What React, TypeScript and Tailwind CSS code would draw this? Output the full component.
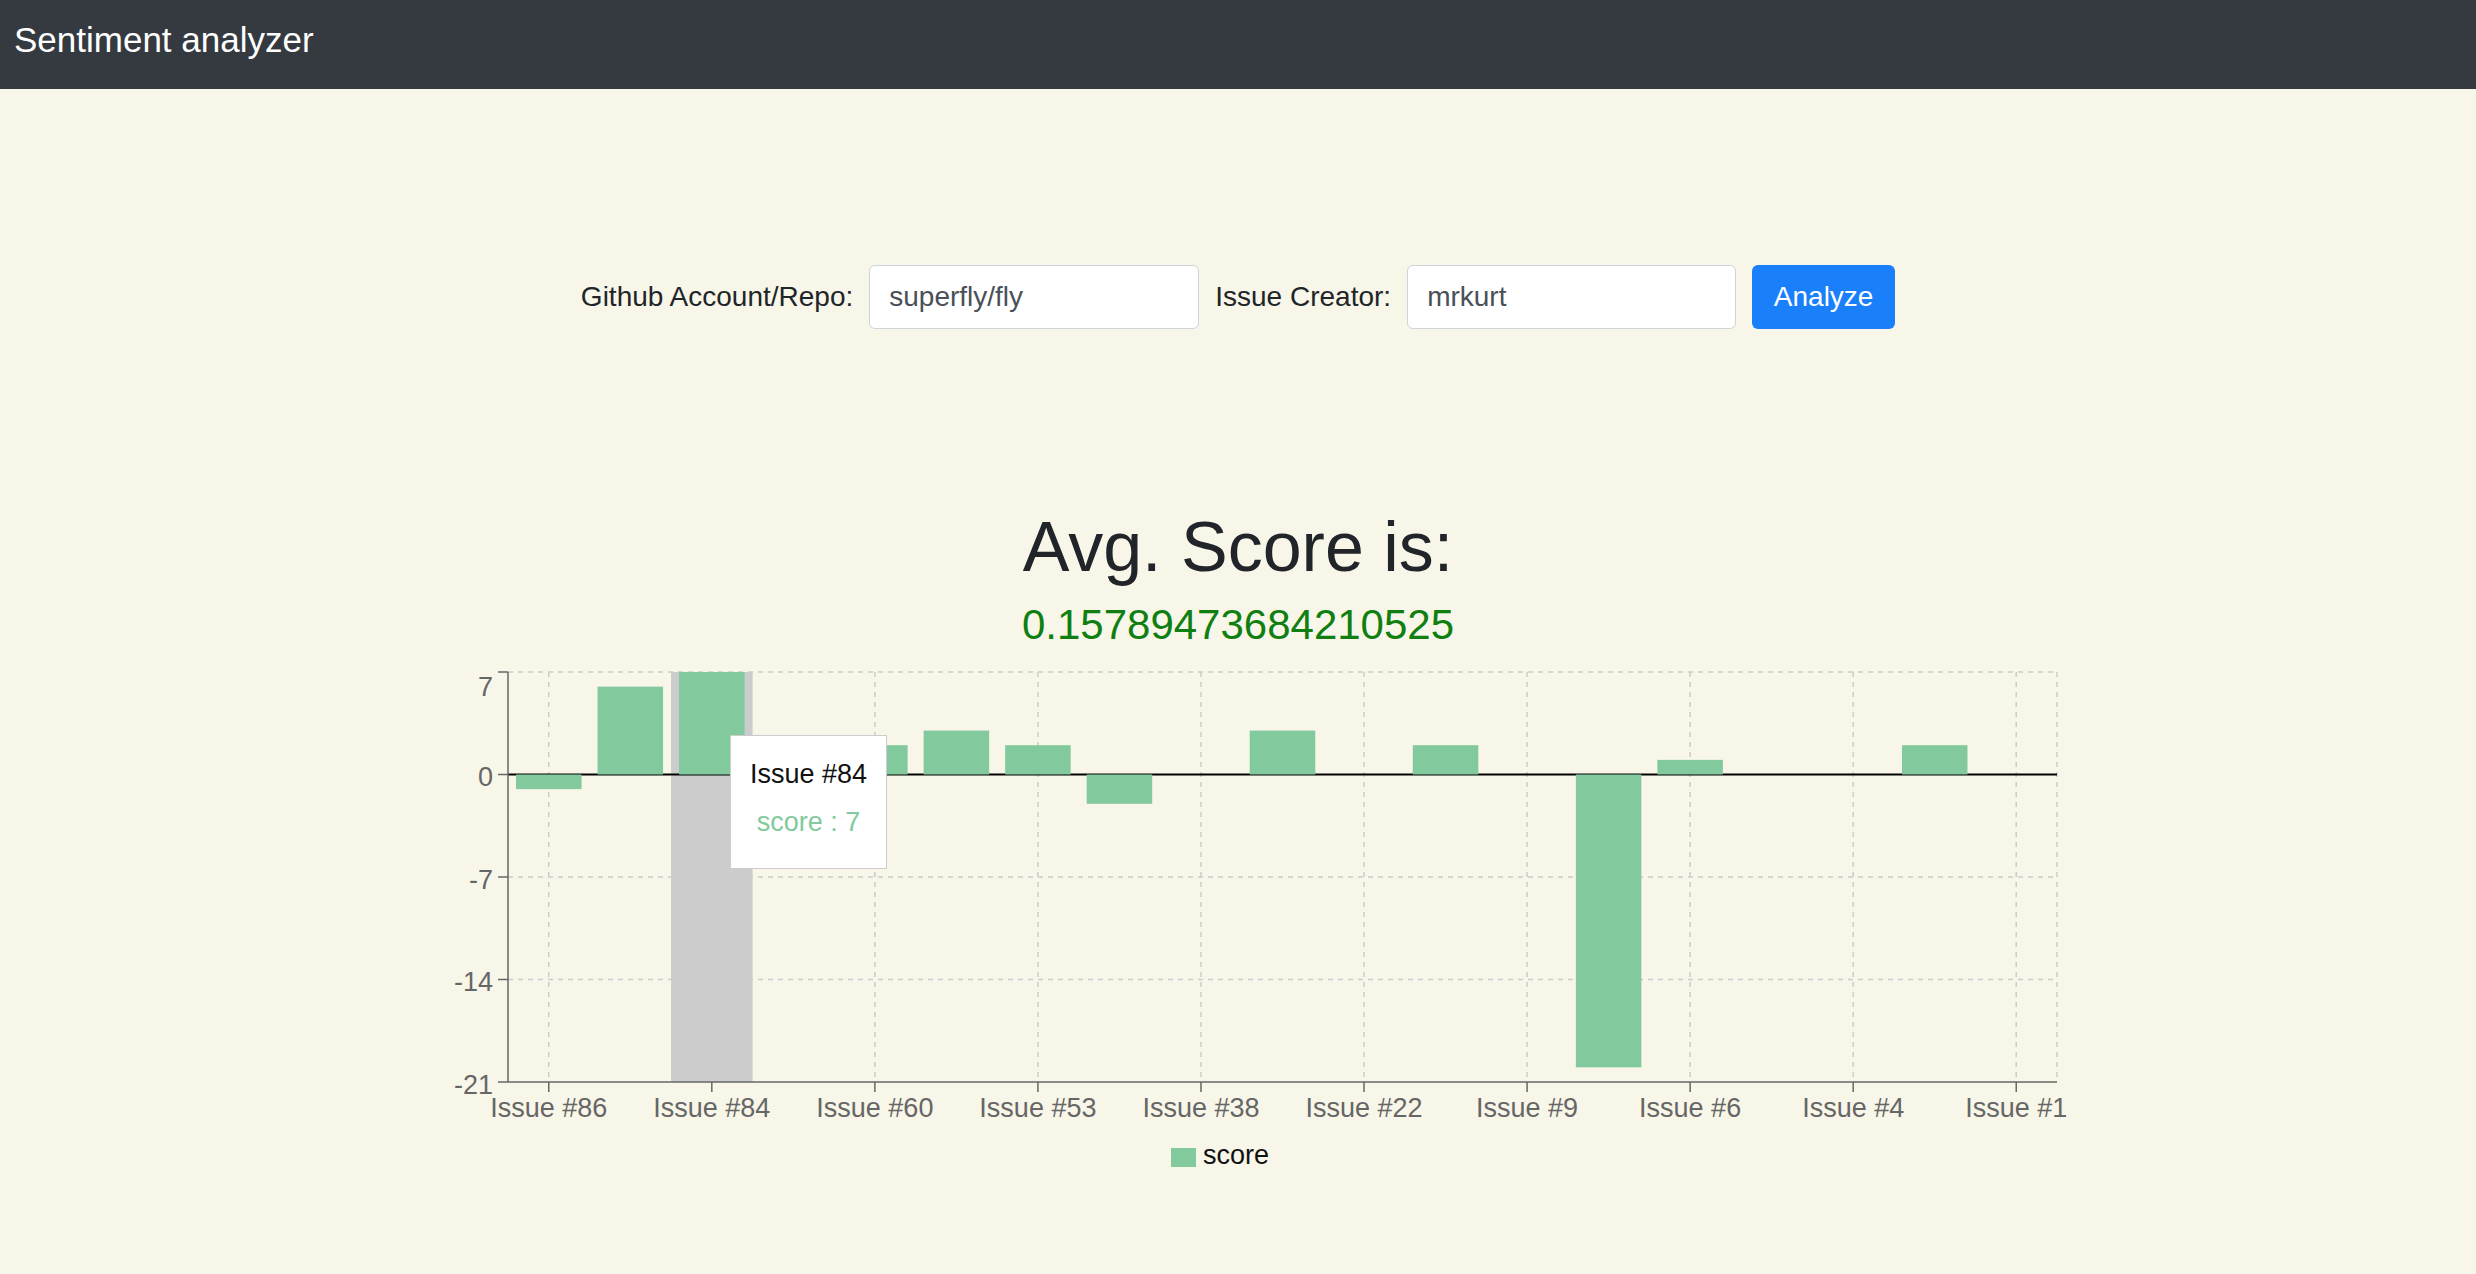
import { Fragment } from "react";

type Point = { name: string; score: number };

const data: Point[] = [
  { name: "Issue #86", score: -1 },
  { name: "Issue #85", score: 6 },
  { name: "Issue #84", score: 7 },
  { name: "Issue #72", score: -2 },
  { name: "Issue #60", score: 2 },
  { name: "Issue #58", score: 3 },
  { name: "Issue #53", score: 2 },
  { name: "Issue #47", score: -2 },
  { name: "Issue #38", score: 0 },
  { name: "Issue #31", score: 3 },
  { name: "Issue #22", score: 0 },
  { name: "Issue #14", score: 2 },
  { name: "Issue #9", score: 0 },
  { name: "Issue #8", score: -20 },
  { name: "Issue #6", score: 1 },
  { name: "Issue #5", score: 0 },
  { name: "Issue #4", score: 0 },
  { name: "Issue #2", score: 2 },
  { name: "Issue #1", score: 0 },
];

// plot area inside the svg
const X0 = 108;
const X1 = 1657;
const Y0 = 23;
const Y1 = 433;
const MIN = -21;
const MAX = 7;
const band = (X1 - X0) / data.length;
const yOf = (v: number) => Y0 + ((MAX - v) * (Y1 - Y0)) / (MAX - MIN);
const yTicks = [7, 0, -7, -14, -21];
const active = 2;

const ScoreChart = () => {
  const zero = yOf(0);
  return (
    <div className="relative mt-[3px] h-[540px] w-[1676px]">
      <svg width={1676} height={540} className="block">
        {/* grid */}
        {[7, -7, -14].map((v) => (
          <line
            key={v}
            x1={X0}
            x2={X1}
            y1={yOf(v)}
            y2={yOf(v)}
            stroke="#ccc"
            strokeWidth={1.5}
            strokeDasharray="5 5"
          />
        ))}
        {data.map((d, i) =>
          i % 2 === 0 ? (
            <line
              key={d.name}
              x1={X0 + band * (i + 0.5)}
              x2={X0 + band * (i + 0.5)}
              y1={Y0}
              y2={Y1}
              stroke="#ccc"
              strokeWidth={1.5}
              strokeDasharray="5 5"
            />
          ) : null
        )}
        <line x1={X1} x2={X1} y1={Y0} y2={Y1} stroke="#ccc" strokeWidth={1.5} strokeDasharray="5 5" />

        {/* hover cursor */}
        <rect x={X0 + band * active} y={Y0} width={band} height={Y1 - Y0} fill="#ccc" />

        <line x1={X0} x2={X1} y1={zero} y2={zero} stroke="#000" strokeWidth={2} />

        {data.map((d, i) =>
          d.score !== 0 ? (
            <rect
              key={d.name}
              x={X0 + band * i + 8}
              width={band - 16}
              y={Math.min(yOf(d.score), zero)}
              height={Math.abs(yOf(d.score) - zero)}
              fill="#82ca9d"
            />
          ) : null
        )}

        {/* y axis */}
        <line x1={X0} x2={X0} y1={Y0} y2={Y1} stroke="#666" strokeWidth={1.5} />
        {yTicks.map((v) => (
          <Fragment key={v}>
            <line x1={X0 - 10} x2={X0} y1={yOf(v)} y2={yOf(v)} stroke="#666" strokeWidth={1.5} />
            <text
              x={93}
              y={(v === 7 ? yOf(v) + 14 : yOf(v) + 2) + 9.5}
              textAnchor="end"
              fill="#666"
              fontSize={27}
            >
              {v}
            </text>
          </Fragment>
        ))}

        {/* x axis */}
        <line x1={X0} x2={X1} y1={Y1} y2={Y1} stroke="#666" strokeWidth={1.5} />
        {data.map((d, i) =>
          i % 2 === 0 ? (
            <Fragment key={d.name}>
              <line
                x1={X0 + band * (i + 0.5)}
                x2={X0 + band * (i + 0.5)}
                y1={Y1}
                y2={Y1 + 10}
                stroke="#666"
                strokeWidth={1.5}
              />
              <text x={X0 + band * (i + 0.5)} y={468} textAnchor="middle" fill="#666" fontSize={27}>
                {d.name}
              </text>
            </Fragment>
          ) : null
        )}

        {/* legend */}
        <rect x={771} y={499} width={25} height={19} fill="#82ca9d" />
        <text x={803} y={515} fill="#111" fontSize={27}>
          score
        </text>
      </svg>

      <div className="absolute left-[330px] top-[86px] flex h-[134px] w-[157px] flex-col items-center border-[1.5px] border-[#ccc] bg-white pt-[18px] text-[27px]">
        <p className="leading-[40px] text-[#111]">Issue #84</p>
        <p className="pt-[8px] leading-[40px] text-[#82ca9d]">score : 7</p>
      </div>
    </div>
  );
};

export default function App() {
  return (
    <div className="min-h-screen bg-[#f8f6e8] font-['Liberation_Sans',Arial,sans-serif]">
      <header className="h-[89px] bg-[#343a40] px-[14px] pt-[22px]">
        <span className="block text-[35px] leading-[35px] text-white">Sentiment analyzer</span>
      </header>
      <main className="flex flex-col items-center">
        <form className="mt-[176px] flex items-center gap-[16px]" onSubmit={(e) => e.preventDefault()}>
          <label className="text-[28px] text-[#212529]">Github Account/Repo:</label>
          <input
            className="h-[64px] w-[330px] rounded-[6px] border border-[#ced4da] bg-white px-[19px] text-[28px] text-[#495057]"
            defaultValue="superfly/fly"
          />
          <label className="text-[28px] text-[#212529]">Issue Creator:</label>
          <input
            className="h-[64px] w-[329px] rounded-[6px] border border-[#ced4da] bg-white px-[19px] text-[28px] text-[#495057]"
            defaultValue="mrkurt"
          />
          <button className="h-[64px] w-[143px] rounded-[6px] bg-[#1a7ffb] text-[28px] text-white">
            Analyze
          </button>
        </form>
        <h2 className="mt-[183px] text-[70px] leading-[70px] text-[#212529]">Avg. Score is:</h2>
        <p className="mt-[22px] text-[42px] leading-[42px] text-[#0f7f12]">0.15789473684210525</p>
        <ScoreChart />
      </main>
    </div>
  );
}
